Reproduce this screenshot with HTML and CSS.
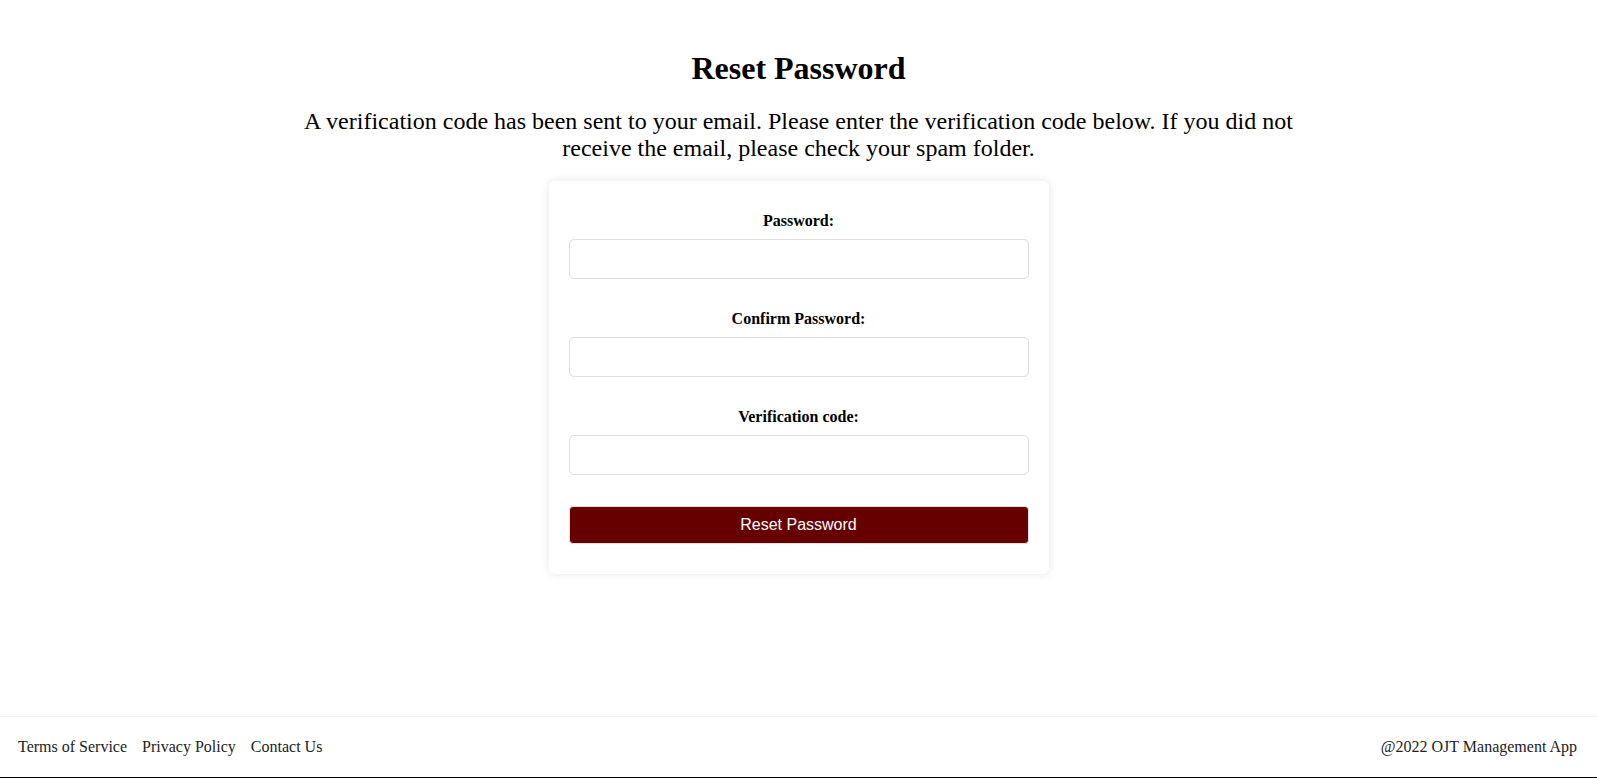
FILE: index.html
```html
<!DOCTYPE html>
<html lang="en">
<head>
<meta charset="utf-8">
<title>Reset Password</title>
<link rel="stylesheet" href="styles.css">
</head>
<body>
<div class="page">
  <main class="main">
    <h1 class="title">Reset Password</h1>
    <p class="intro">A verification code has been sent to your email. Please enter the verification code below. If you did not receive the email, please check your spam folder.</p>
    <form class="card">
      <div class="group">
        <label class="label" for="pw">Password:</label>
        <input class="input" id="pw" type="password">
      </div>
      <div class="group">
        <label class="label" for="cpw">Confirm Password:</label>
        <input class="input" id="cpw" type="password">
      </div>
      <div class="group">
        <label class="label" for="code">Verification code:</label>
        <input class="input" id="code" type="text">
      </div>
      <button class="btn" type="button">Reset Password</button>
    </form>
  </main>
  <footer class="footer">
    <nav class="links">
      <a href="#">Terms of Service</a>
      <a href="#">Privacy Policy</a>
      <a href="#">Contact Us</a>
    </nav>
    <div class="copy">@2022 OJT Management App</div>
  </footer>
</div>
</body>
</html>
```
FILE: styles.css
```css
* { box-sizing: border-box; }
html, body { margin: 0; padding: 0; }
body {
  font-family: "Liberation Serif", "Times New Roman", serif;
  color: #000;
  background: #fff;
}
.page {
  min-height: 100vh;
  display: flex;
  flex-direction: column;
}
.main {
  flex: 1;
  display: flex;
  flex-direction: column;
  align-items: center;
  text-align: center;
  padding-top: 50px;
}
.title {
  margin: 0;
  font-size: 32px;
  font-weight: bold;
}
.intro {
  width: 1000px;
  margin: 21px 0 0;
  font-size: 24px;
  line-height: 27px;
}
.card {
  width: 500px;
  margin-top: 19px;
  padding: 21px 20px 20px;
  background: #fff;
  border-radius: 6px;
  box-shadow: 0 0 10px rgba(0, 0, 0, 0.1);
}
.group {
  padding-top: 10px;
  margin-bottom: 21px;
}
.label {
  display: block;
  font-size: 16px;
  font-weight: bold;
  margin-bottom: 9px;
}
.input {
  display: block;
  width: 100%;
  height: 40px;
  padding: 8px 10px;
  border: 1px solid #ddd;
  border-radius: 5px;
  font-size: 16px;
  background: #fff;
}
.btn {
  display: block;
  width: 100%;
  height: 38px;
  margin: 31px 0 10px;
  border: 1px solid #e0e0e0;
  border-radius: 4px;
  background: #660000;
  color: #fff;
  font-family: "Liberation Sans", Arial, sans-serif;
  font-size: 16px;
}
.footer {
  height: 62px;
  display: flex;
  justify-content: space-between;
  align-items: center;
  padding: 0 20px 0 18px;
  border-top: 1px solid #f0f0f0;
  border-bottom: 1px solid #000;
  font-size: 16px;
  color: #222;
}
.links {
  display: flex;
  gap: 15px;
}
.links a {
  color: #222;
  text-decoration: none;
}
```
